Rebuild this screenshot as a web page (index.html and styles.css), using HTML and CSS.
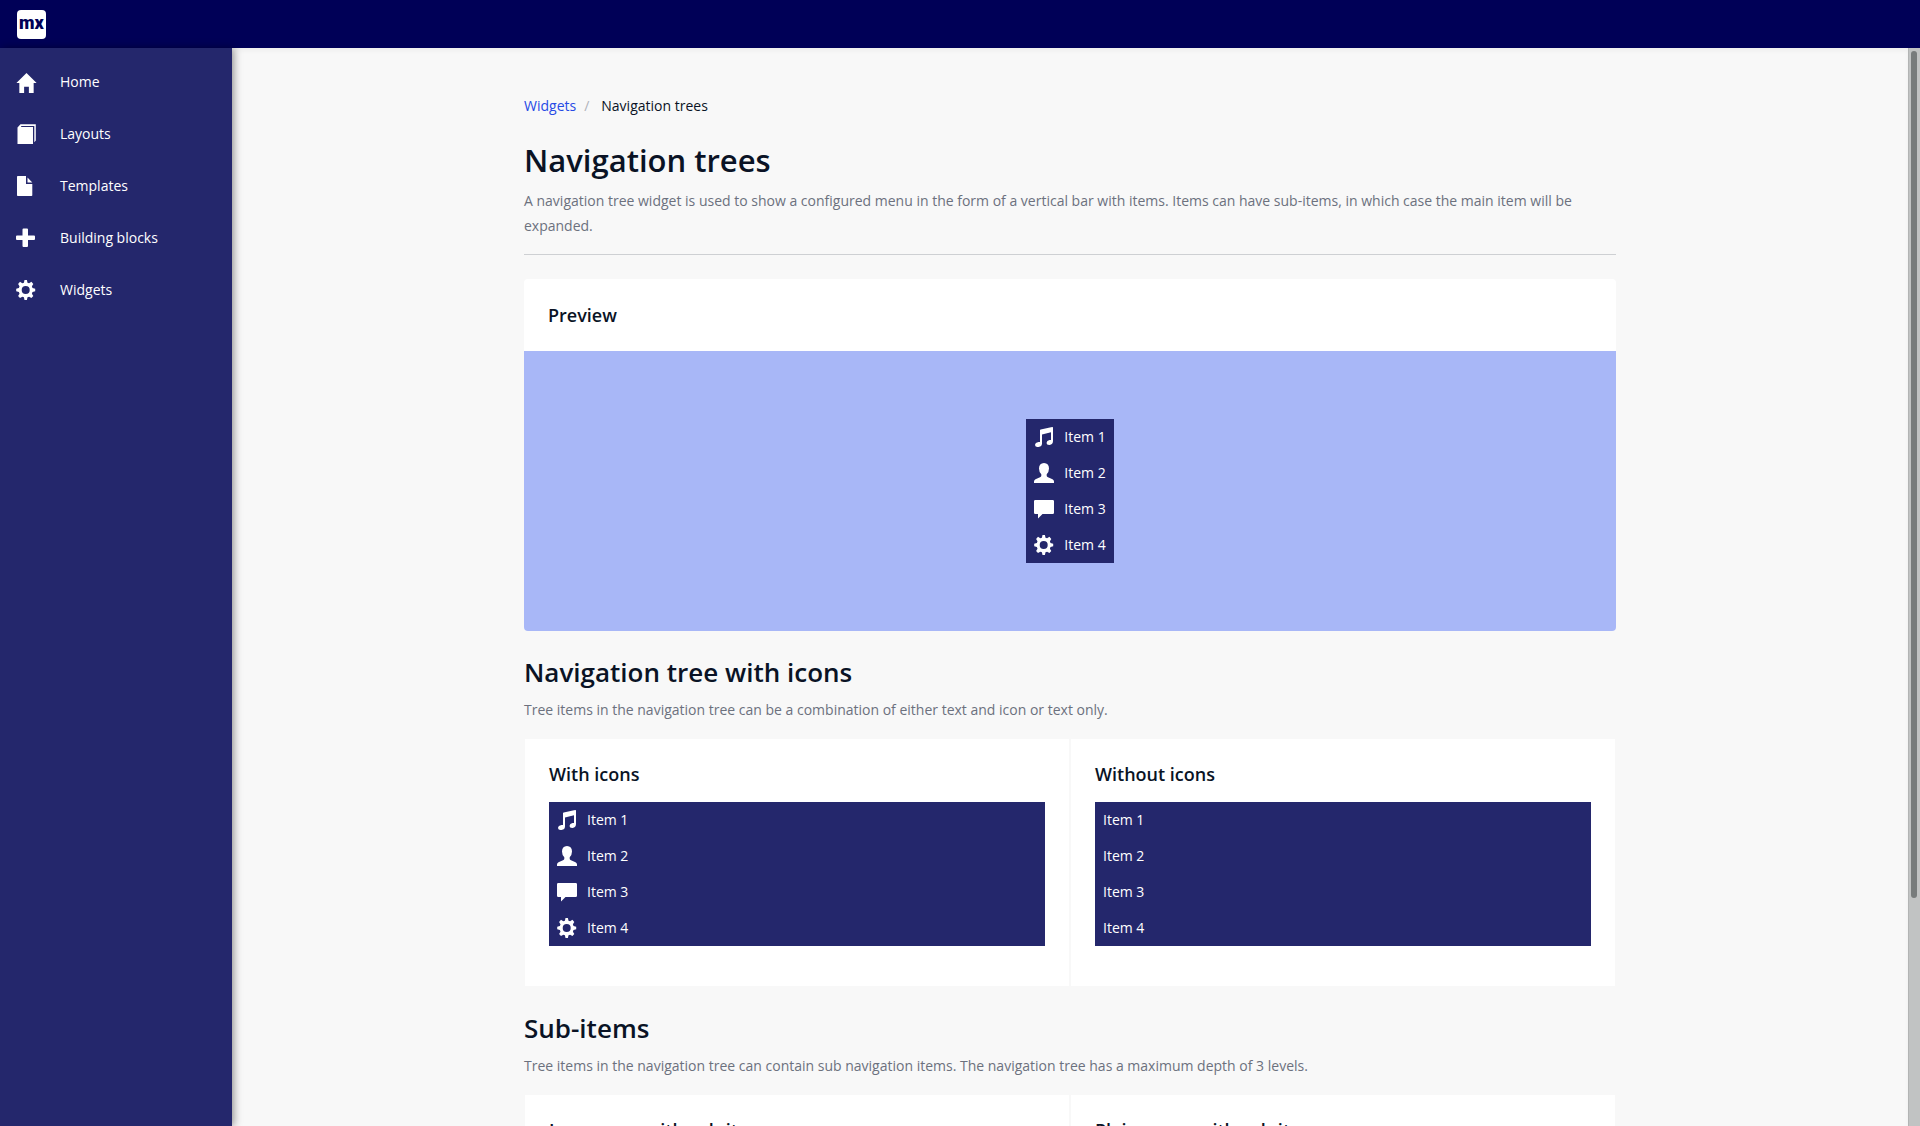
FILE: index.html
```html
<!DOCTYPE html>
<html lang="en">
<head>
<meta charset="utf-8">
<meta name="viewport" content="width=device-width, initial-scale=1">
<title>Navigation trees</title>
<link rel="stylesheet" href="styles.css">
</head>
<body>
<svg class="sprite" aria-hidden="true">
  <symbol id="home" viewBox="0 0 22 22"><path d="M11 1 21.600 11.500H18.500V22H13.500V15.500H8.500V22H3.500V11.500H.400Z"/></symbol>
  <symbol id="layouts" viewBox="0 0 20 20"><path d="M1.500 3.500 4.500 .2H19.800V16.500L18.300 18.200V2H5.500L4.800 3H17V20H1.500Z"/></symbol>
  <symbol id="file" viewBox="0 0 20 20"><path d="M1 .8Q1 0 1.800 0H10V8H16.300V19.200Q16.300 20 15.500 20H1.800Q1 20 1 19.200ZM11.500 1.500 16.300 6.500H11.500Z"/></symbol>
  <symbol id="plus" viewBox="0 0 20 20"><path d="M7.500 .5H11Q12 .5 12 1.500V7.500H18Q19 7.500 19 8.500V11Q19 12 18 12H12V18Q12 19 11 19H7.500Q6.500 19 6.500 18V12H1Q0 12 0 11V8.500Q0 7.500 1 7.500H6.500V1.500Q6.500 .5 7.500 .5Z"/></symbol>
  <symbol id="cog" viewBox="0 0 20 20"><path fill-rule="evenodd" d="M8.500 0H10.900L11.500 2.700 13.100 3.300 15.400 1.800 17.300 3.900 15.900 6.300 16.500 7.900 19.200 8.700V11.200L16.500 12.100 15.900 13.700 17.300 16 15.400 18.100 13.100 16.700 11.500 17.300 10.900 20H8.500L7.900 17.300 6.300 16.700 4 18.100 2.100 16 3.500 13.700 2.900 12.100 .2 11.200V8.700L2.900 7.900 3.500 6.300 2.100 3.900 4 1.800 6.300 3.300 7.900 2.700ZM9.700 6A4 4 0 1 0 9.700 14 4 4 0 1 0 9.700 6Z"/></symbol>
  <symbol id="music" viewBox="0 0 20 20"><path d="M6 3.300Q6 2.600 6.700 2.400L18.200 .1Q19 0 19 .8V14Q19 17.500 15.500 18 12.700 18.200 12.500 16 12.700 13.500 15.500 13H17V5.200L8 7.500V16.500Q8 19.500 4.500 20 1.200 20.200 1 18 1.200 15.500 4.500 15H6Z"/></symbol>
  <symbol id="user" viewBox="0 0 20 20"><path d="M10 0Q15 .2 15 5.500 14.900 9.500 12.700 11.300V13Q13 13.700 14 14.200L18.500 16.300Q20 17.100 20 18.500V20H0V18.500Q0 17.100 1.500 16.300L6 14.200Q7 13.700 7.300 13V11.300Q5.100 9.500 5 5.500 5 .2 10 0Z"/></symbol>
  <symbol id="comment" viewBox="0 0 20 20"><path d="M1.300 1H18.700Q20 1 20 2.300V13.700Q20 15 18.700 15H8.500L4 19.500V15H1.300Q0 15 0 13.700V2.300Q0 1 1.300 1Z"/></symbol>
</svg>
<header class="topbar">
  <a class="logo" href="#" aria-label="Home page">mx</a>
</header>
<div class="shell">
  <nav class="sidebar" aria-label="Main">
    <a href="#"><svg class="icon icon-home"><use href="#home"/></svg>Home</a>
    <a href="#"><svg class="icon"><use href="#layouts"/></svg>Layouts</a>
    <a href="#"><svg class="icon"><use href="#file"/></svg>Templates</a>
    <a href="#"><svg class="icon"><use href="#plus"/></svg>Building blocks</a>
    <a href="#"><svg class="icon"><use href="#cog"/></svg>Widgets</a>
  </nav>
  <main class="content">
    <div class="container">
      <ol class="breadcrumb">
        <li><a href="#">Widgets</a></li>
        <li>Navigation trees</li>
      </ol>
      <div class="page-header">
        <h1>Navigation trees</h1>
        <p>A navigation tree widget is used to show a configured menu in the form of a vertical bar with items. Items can have sub-items, in which case the main item will be expanded.</p>
      </div>
      <section class="card">
        <h3>Preview</h3>
        <div class="preview">
          <nav class="tree" aria-label="Preview">
            <a href="#"><svg class="icon"><use href="#music"/></svg>Item 1</a>
            <a href="#"><svg class="icon"><use href="#user"/></svg>Item 2</a>
            <a href="#"><svg class="icon"><use href="#comment"/></svg>Item 3</a>
            <a href="#"><svg class="icon"><use href="#cog"/></svg>Item 4</a>
          </nav>
        </div>
      </section>
      <section class="section">
        <h2>Navigation tree with icons</h2>
        <p>Tree items in the navigation tree can be a combination of either text and icon or text only.</p>
        <div class="columns">
          <div class="cell">
            <h3>With icons</h3>
            <nav class="tree" aria-label="With icons">
              <a href="#"><svg class="icon"><use href="#music"/></svg>Item 1</a>
              <a href="#"><svg class="icon"><use href="#user"/></svg>Item 2</a>
              <a href="#"><svg class="icon"><use href="#comment"/></svg>Item 3</a>
              <a href="#"><svg class="icon"><use href="#cog"/></svg>Item 4</a>
            </nav>
          </div>
          <div class="cell">
            <h3>Without icons</h3>
            <nav class="tree" aria-label="Without icons">
              <a href="#">Item 1</a>
              <a href="#">Item 2</a>
              <a href="#">Item 3</a>
              <a href="#">Item 4</a>
            </nav>
          </div>
        </div>
      </section>
      <section class="section">
        <h2>Sub-items</h2>
        <p>Tree items in the navigation tree can contain sub navigation items. The navigation tree has a maximum depth of 3 levels.</p>
        <div class="columns">
          <div class="cell"><h3>Icon menu with sub-items</h3></div>
          <div class="cell"><h3>Plain menu with sub-items</h3></div>
        </div>
      </section>
    </div>
  </main>
  <div class="scrollbar" aria-hidden="true"><div class="thumb"></div></div>
</div>
</body>
</html>
```
FILE: styles.css
```css
* { box-sizing: border-box; }

body {
  display: flex;
  flex-direction: column;
  height: 100vh;
  margin: 0;
  overflow: hidden;
  background: #f8f8f8;
  color: #0a1325;
  font: 14px/20px "Open Sans", sans-serif;
}

h1, h2, h3, p { margin: 0; font-weight: 600; }
h1 { font-size: 31px; line-height: 40px; }
h2 { font-size: 26px; line-height: 34px; }
h3 { font-size: 18px; line-height: 24px; }

p {
  margin-top: 8px;
  color: #6c717e;
  font-weight: 400;
  line-height: 25px;
}

a { color: #264ae5; text-decoration: none; }

.sprite { display: none; }

.icon {
  flex: none;
  width: 20px;
  height: 20px;
  fill: #fff;
}

.icon-home { width: 21px; height: 21px; }

.topbar {
  display: flex;
  flex: none;
  align-items: center;
  height: 48px;
  padding: 0 17px;
  background: #000057;
}

.logo {
  width: 29px;
  height: 29px;
  border-radius: 4px;
  background: #fff;
  color: #000057;
  font: 900 18px/25px Roboto, sans-serif;
  text-align: center;
}

.shell { display: flex; flex: 1; min-height: 0; }

.sidebar {
  z-index: 1;
  flex: none;
  width: 232px;
  padding-top: 8px;
  background: #24276c;
  box-shadow: 2px 0 8px rgba(0, 0, 0, .4);
}

.sidebar a {
  display: grid;
  grid-template-columns: 44px 1fr;
  align-items: center;
  height: 52px;
  padding: 0 16px;
  color: #fff;
}

.content {
  flex: 1;
  overflow: hidden;
  box-shadow: inset 0 3px 4px rgba(0, 0, 0, .04);
}

.container {
  max-width: 1140px;
  margin: 0 auto;
  padding: 48px 24px;
}

.breadcrumb {
  display: flex;
  margin: 0 0 24px;
  padding: 0;
  list-style: none;
}

.breadcrumb li + li::before {
  content: "/";
  padding: 0 12px 0 8px;
  color: #b0b3ba;
}

.page-header {
  margin-bottom: 24px;
  padding-bottom: 16px;
  border-bottom: 1px solid #ced0d3;
}

.card {
  overflow: hidden;
  border-radius: 4px;
  background: #fff;
}

.card h3 { padding: 24px; }

.preview {
  display: flex;
  justify-content: center;
  padding: 68px 24px;
  background: #a8b7f7;
}

.tree { background: #24276c; }

.tree a {
  display: flex;
  align-items: center;
  gap: 10px;
  height: 36px;
  padding: 0 8px;
  color: #fff;
}

.section { margin-top: 24px; }

.columns {
  display: grid;
  grid-template-columns: 1fr 1fr;
  margin-top: 16px;
}

.cell {
  padding: 23px 24px 40px;
  border: 1px solid #f8f8f8;
  background: #fff;
}

.cell h3 { margin-bottom: 16px; }

.scrollbar {
  flex: none;
  width: 12px;
  padding: 3px 3px 3px 2px;
  border-left: 1px solid #b2b4b4;
  background: #c1c3c3;
}

.thumb {
  width: 6px;
  height: 79%;
  border-radius: 3px;
  background: #787c7c;
}
```
